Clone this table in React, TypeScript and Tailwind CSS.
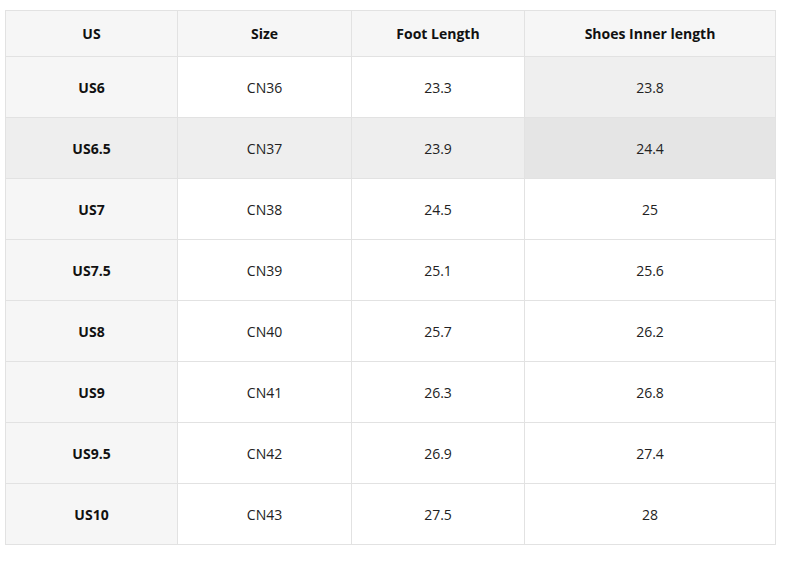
const rows = [
  { us: 'US6', size: 'CN36', foot: '23.3', inner: '23.8' },
  { us: 'US6.5', size: 'CN37', foot: '23.9', inner: '24.4' },
  { us: 'US7', size: 'CN38', foot: '24.5', inner: '25' },
  { us: 'US7.5', size: 'CN39', foot: '25.1', inner: '25.6' },
  { us: 'US8', size: 'CN40', foot: '25.7', inner: '26.2' },
  { us: 'US9', size: 'CN41', foot: '26.3', inner: '26.8' },
  { us: 'US9.5', size: 'CN42', foot: '26.9', inner: '27.4' },
  { us: 'US10', size: 'CN43', foot: '27.5', inner: '28' },
];

export default function App() {
  return (
    <div className="w-[790px] h-[564px] bg-white pt-[10px] pl-[5px] text-[14px] text-[#222] font-['Open_Sans','Noto_Sans',sans-serif]">
      <table className="w-[770px] border-collapse table-fixed text-center">
        <colgroup>
          <col className="w-[172px]" />
          <col className="w-[174px]" />
          <col className="w-[173px]" />
          <col className="w-[251px]" />
        </colgroup>
        <thead>
          <tr className="h-[46px] bg-[#f6f6f6] font-bold text-[#111]">
            <th className="border border-[#e2e2e2]">US</th>
            <th className="border border-[#e2e2e2]">Size</th>
            <th className="border border-[#e2e2e2]">Foot Length</th>
            <th className="border border-[#e2e2e2]">Shoes Inner length</th>
          </tr>
        </thead>
        <tbody>
          {rows.map((r, i) => {
            const hover = i === 1;
            return (
              <tr key={r.us} className={`h-[61px] ${hover ? 'bg-[#eeeeee]' : 'bg-white'}`}>
                <td className={`border border-[#e2e2e2] font-bold text-[#111] ${hover ? 'bg-[#eeeeee]' : 'bg-[#f6f6f6]'}`}>{r.us}</td>
                <td className="border border-[#e2e2e2]">{r.size}</td>
                <td className="border border-[#e2e2e2]">{r.foot}</td>
                <td className={`border border-[#e2e2e2] ${i === 0 ? 'bg-[#efefef]' : hover ? 'bg-[#e5e5e5]' : ''}`}>{r.inner}</td>
              </tr>
            );
          })}
        </tbody>
      </table>
    </div>
  );
}
